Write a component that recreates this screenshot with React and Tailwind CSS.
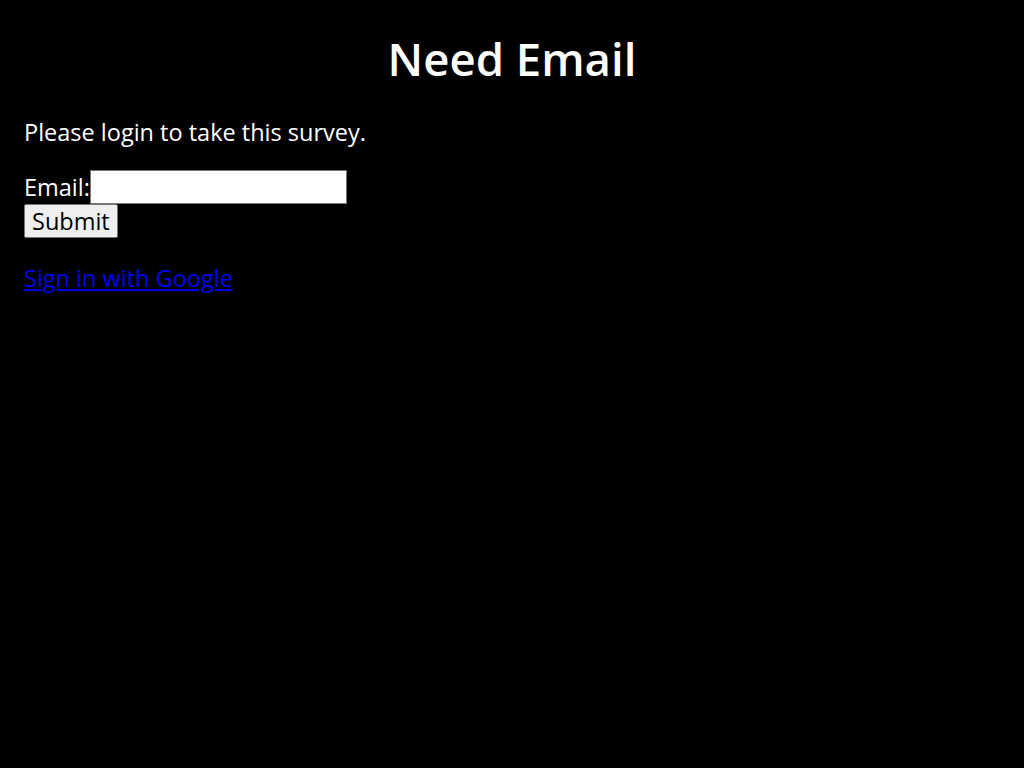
export default function App() {
  return (
    <div className="min-h-screen bg-black text-white p-6 font-['Open_Sans',sans-serif] text-[23.5px] leading-[33px]">
      <h1 className="text-center text-[45.5px] font-semibold leading-[56px] mt-[6px]">Need Email</h1>
      <p className="mt-[30px]">Please login to take this survey.</p>
      <form className="mt-[21px]" onSubmit={(e) => e.preventDefault()}>
        <div className="flex items-center">
          <label htmlFor="email">Email:</label>
          <input
            id="email"
            type="email"
            className="w-[257px] h-[34px] bg-white border border-[#767676] text-black"
          />
        </div>
        <button
          type="submit"
          className="bg-[#efefef] text-black border border-[#767676] rounded-[2px] px-[7px] h-[34px] leading-[30px]"
        >
          Submit
        </button>
      </form>
      <a href="#" className="block mt-[24px] text-[#0000ee] underline">
        Sign in with Google
      </a>
    </div>
  );
}
